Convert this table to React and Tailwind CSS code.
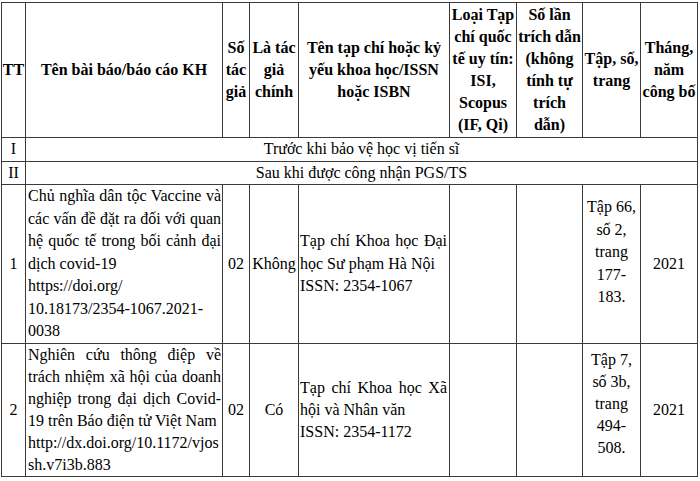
const J = ({ children }) => (
  <div className="text-justify [text-align-last:justify]">{children}</div>
);
const L = ({ children }) => <div>{children}</div>;

const cell = "border border-[#3a3a3a] align-middle p-0";

export default function App() {
  return (
    <div className="w-[700px] h-[481px] bg-white overflow-hidden pt-[2px] pl-[1px] [font-family:'Liberation_Serif','Times_New_Roman',serif] text-[16px] text-black">
      <table className="table-fixed border-collapse w-[696px]">
        <colgroup>
          <col className="w-[24px]" />
          <col className="w-[197px]" />
          <col className="w-[27px]" />
          <col className="w-[49px]" />
          <col className="w-[151px]" />
          <col className="w-[67px]" />
          <col className="w-[66px]" />
          <col className="w-[58px]" />
          <col className="w-[57px]" />
        </colgroup>
        <tbody>
          {/* header */}
          <tr className="h-[135px] font-bold text-center leading-[22px]">
            <td className={cell}>TT</td>
            <td className={cell}>Tên bài báo/báo cáo KH</td>
            <td className={cell}>Số<br />tác<br />giả</td>
            <td className={cell}>Là tác<br />giả<br />chính</td>
            <td className={cell}>Tên tạp chí hoặc kỷ<br />yếu khoa học/ISSN<br />hoặc ISBN</td>
            <td className={cell}>Loại Tạp<br />chí quốc<br />tế uy tín:<br />ISI,<br />Scopus<br />(IF, Qi)</td>
            <td className={cell}>Số lần<br />trích dẫn<br />(không<br />tính tự<br />trích<br />dẫn)</td>
            <td className={cell}>Tập, số,<br />trang</td>
            <td className={cell}>Tháng,<br />năm<br />công bố</td>
          </tr>

          {/* section rows */}
          <tr className="leading-[22.5px]">
            <td className={cell + " text-center"}>I</td>
            <td className={cell + " text-center"} colSpan={8}>Trước khi bảo vệ học vị tiến sĩ</td>
          </tr>
          <tr className="leading-[22.5px]">
            <td className={cell + " text-center"}>II</td>
            <td className={cell + " text-center"} colSpan={8}>Sau khi được công nhận PGS/TS</td>
          </tr>

          {/* row 1 */}
          <tr className="leading-[22.5px]">
            <td className={cell + " text-center"}>1</td>
            <td className={cell + " pl-[2px] pr-[1px]"}>
              <J>Chủ nghĩa dân tộc Vaccine và</J>
              <J>các vấn đề đặt ra đối với quan</J>
              <J>hệ quốc tế trong bối cảnh đại</J>
              <L>dịch covid-19</L>
              <L>https://doi.org/</L>
              <L>10.18173/2354-1067.2021-</L>
              <L>0038</L>
            </td>
            <td className={cell + " text-center"}>02</td>
            <td className={cell + " text-center"}>Không</td>
            <td className={cell + " pl-[1px] pr-[2px]"}>
              <J>Tạp chí Khoa học Đại</J>
              <L>học Sư phạm Hà Nội</L>
              <L>ISSN: 2354-1067</L>
            </td>
            <td className={cell}></td>
            <td className={cell}></td>
            <td className={cell + " text-center"}>
              Tập 66,<br />số 2,<br />trang<br />177-<br />183.<br />&nbsp;
            </td>
            <td className={cell + " text-center"}>2021</td>
          </tr>

          {/* row 2 */}
          <tr className="leading-[22px]">
            <td className={cell + " text-center"}>2</td>
            <td className={cell + " pl-[2px] pr-[1px]"}>
              <J>Nghiên cứu thông điệp về</J>
              <J>trách nhiệm xã hội của doanh</J>
              <J>nghiệp trong đại dịch Covid-</J>
              <L>19 trên Báo điện tử Việt Nam</L>
              <L>http://dx.doi.org/10.1172/vjos</L>
              <L>sh.v7i3b.883</L>
            </td>
            <td className={cell + " text-center"}>02</td>
            <td className={cell + " text-center"}>Có</td>
            <td className={cell + " pl-[1px] pr-[2px]"}>
              <J>Tạp chí Khoa học Xã</J>
              <L>hội và Nhân văn</L>
              <L>ISSN: 2354-1172</L>
            </td>
            <td className={cell}></td>
            <td className={cell}></td>
            <td className={cell + " text-center pb-[11px]"}>
              Tập 7,<br />số 3b,<br />trang<br />494-<br />508.
            </td>
            <td className={cell + " text-center"}>2021</td>
          </tr>
        </tbody>
      </table>
    </div>
  );
}
